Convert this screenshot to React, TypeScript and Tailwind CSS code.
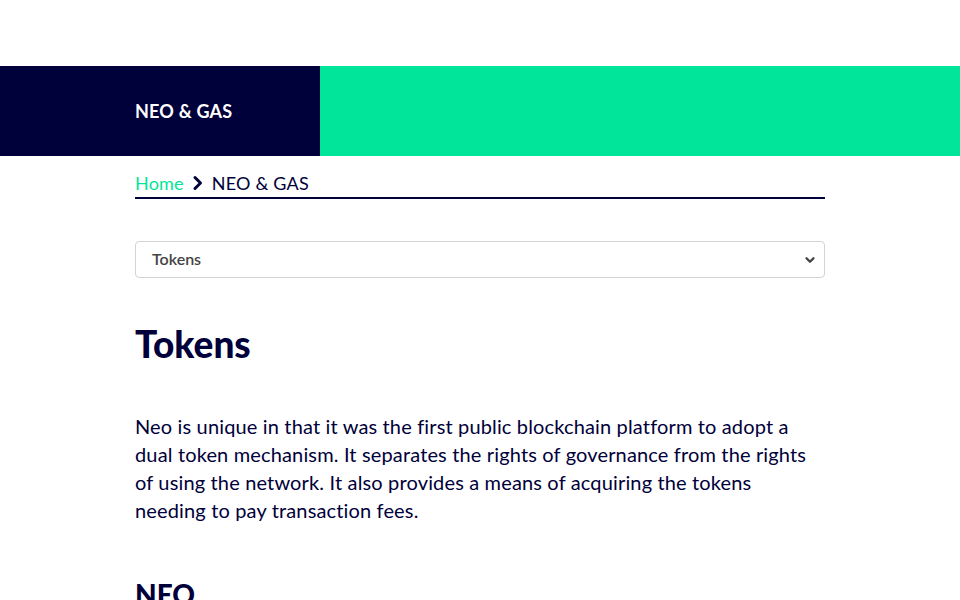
import { ChevronDown } from 'lucide-react'

export default function App() {
  return (
    <div className="min-h-screen bg-white text-[#00003a] font-['Lato','Noto_Sans',sans-serif]">
      <div className="h-[66px]" />
      <header className="flex h-[90px]">
        <div className="flex w-[320px] items-center bg-[#00003a] pl-[135px]">
          <h2 className="text-[18px] font-bold tracking-[0.2px] text-white">NEO &amp; GAS</h2>
        </div>
        <div className="flex-1 bg-[#00e599]" />
      </header>

      <main className="mx-[135px] w-[690px]">
        <nav className="flex h-[43px] items-center gap-2 border-b-2 border-[#00003a] pt-[13px] text-[18px] tracking-[0.2px]">
          <a className="text-[#00e599]">Home</a>
          <svg viewBox="0 0 12 16" className="h-4 w-3" fill="none" stroke="currentColor" strokeWidth={3} strokeLinecap="round" strokeLinejoin="round">
            <polyline points="3,2.5 8.5,8 3,13.5" />
          </svg>
          <span>NEO &amp; GAS</span>
        </nav>

        <div className="relative mt-[42px]">
          <div className="flex h-[37px] items-center rounded border border-[#d4d4d4] px-4 pb-px text-[16px] font-semibold text-[#444]">
            Tokens
          </div>
          <ChevronDown className="absolute right-2 top-[12px] h-3.5 w-3.5 text-[#444]" strokeWidth={4} />
        </div>

        <h1 className="mt-[44px] text-[37px] font-black leading-[44px]">Tokens</h1>

        <p className="mt-[46px] text-[20px] leading-[28px] tracking-[0.15px]">
          Neo is unique in that it was the first public blockchain platform to adopt a dual token
          mechanism. It separates the rights of governance from the rights of using the network. It
          also provides a means of acquiring the tokens needing to pay transaction fees.
        </p>

        <h2 className="mt-[52px] text-[28px] font-black leading-[36px]">NEO</h2>
      </main>
    </div>
  )
}
